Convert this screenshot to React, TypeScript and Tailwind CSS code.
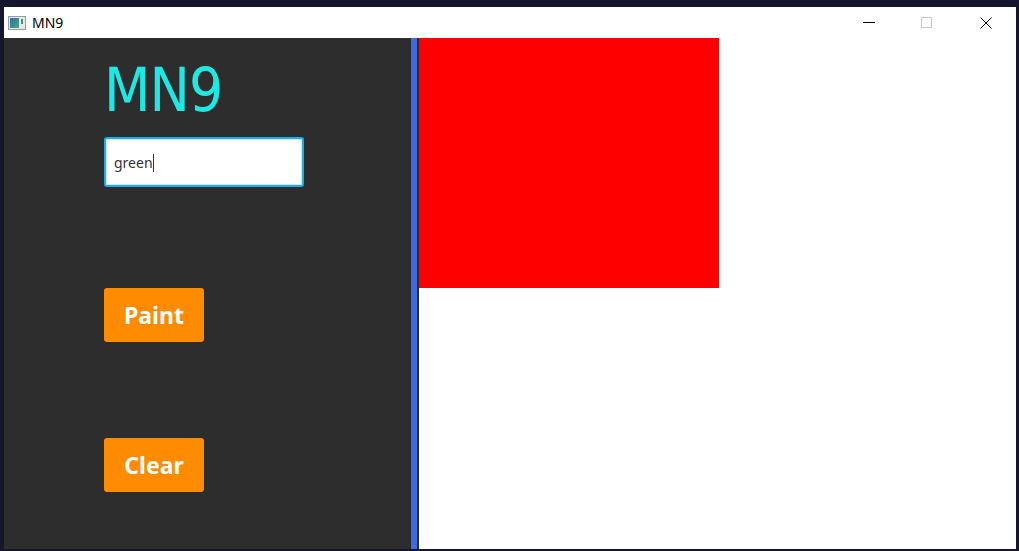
import React from "react";

export default function App() {
  return (
    <div className="w-[1019px] h-[551px] bg-[#16152e] pt-[7px] pl-[4px] pr-[3px] pb-[2px] overflow-hidden" style={{ fontFamily: '"Noto Sans", "Liberation Sans", sans-serif' }}>
      <div className="flex flex-col w-full h-full bg-white">
        {/* title bar */}
        <div className="h-[31px] flex items-center bg-white shrink-0">
          <svg width="18" height="14" viewBox="0 0 18 14" className="ml-[4px]">
            <rect x="0.5" y="0.5" width="17" height="13" fill="#e8e8e8" stroke="#9a9a9a" />
            <rect x="2" y="2" width="9" height="10" fill="url(#g)" />
            <rect x="13" y="3" width="2" height="5" fill="#3c9a6a" />
            <defs>
              <linearGradient id="g" x1="0" y1="0" x2="1" y2="1">
                <stop offset="0" stopColor="#2f6fae" />
                <stop offset="1" stopColor="#49a77a" />
              </linearGradient>
            </defs>
          </svg>
          <span className="ml-[6px] text-[14px] text-black" style={{ fontFamily: '"Noto Sans", sans-serif' }}>MN9</span>
          <div className="ml-auto flex items-center h-full">
            <div className="w-[57px] h-full flex items-center justify-center">
              <div className="w-[12px] h-px bg-black" />
            </div>
            <div className="w-[59px] h-full flex items-center justify-center">
              <div className="w-[11px] h-[11px] border border-[#c8c8c8]" />
            </div>
            <div className="w-[60px] h-full flex items-center justify-center">
              <svg width="12" height="12" viewBox="0 0 12 12">
                <path d="M0.5 0.5 L11.5 11.5 M11.5 0.5 L0.5 11.5" stroke="#000" strokeWidth="1" />
              </svg>
            </div>
          </div>
        </div>
        {/* content */}
        <div className="flex flex-1 min-h-0">
          <div className="w-[407px] bg-[#2d2d2d] pl-[100px] flex flex-col">
            <div className="mt-[20px] h-[64px] leading-[64px] text-[60px] text-[#1de9e4] tracking-[-1px]" style={{ fontFamily: '"DejaVu Sans Condensed", "DejaVu Sans", sans-serif', fontStretch: "condensed" }}>MN9</div>
            <div className="mt-[15px] w-[200px] h-[50px] rounded-[3px] bg-white border-2 border-[#1ab0e6] shadow-[inset_0_0_0_1px_#cfe7f5] flex items-center pl-[8px]">
              <span className="text-[14px] text-[#333] mt-[1px]" style={{ fontFamily: '"Noto Sans", sans-serif' }}>green</span>
              <span className="w-px h-[18px] bg-[#333] mt-[1px]" />
            </div>
            <button className="mt-[101px] w-[100px] h-[54px] rounded-[3px] bg-[#ff8c00] text-white font-bold text-[23px] leading-none" style={{ fontFamily: '"Noto Sans", sans-serif' }}>Paint</button>
            <button className="mt-[96px] w-[100px] h-[54px] rounded-[3px] bg-[#ff8c00] text-white font-bold text-[23px] leading-none" style={{ fontFamily: '"Noto Sans", sans-serif' }}>Clear</button>
          </div>
          <div className="w-[6px] bg-[#4169e1]" />
          <div className="w-[2px] bg-[#2d2d2d]" />
          <div className="flex-1 bg-white">
            <div className="w-[300px] h-[250px] bg-[#ff0000]" />
          </div>
        </div>
      </div>
    </div>
  );
}
